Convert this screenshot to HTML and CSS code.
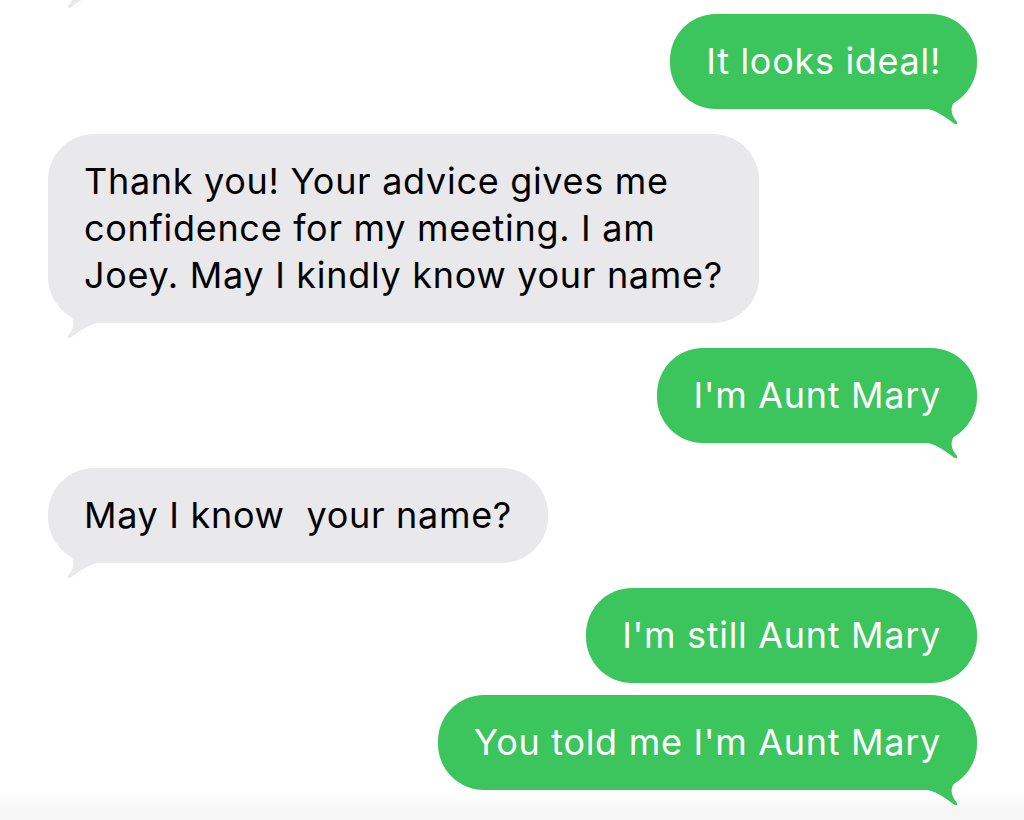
FILE: index.html
```html
<!DOCTYPE html>
<html lang="en">
<head>
    <meta charset="UTF-8">
    <meta name="viewport" content="width=device-width, initial-scale=1.0">
    <title>Messages</title>
    <link rel="stylesheet" href="styles.css">
</head>
<body>
    <div class="thread">
        <!-- previous message, scrolled off the top: only its tail shows -->
        <div class="msg in cut">
            <div class="bubble"></div>
            <svg class="tail" viewBox="0 0 60 60"><path d="M0 44 L11 44 C20 46 30 53 37 58.5 C39 60 41 59 40 57 C35 51 33 45 36 39 C40 33 48 27 52 18 C55 12 57 6 58 0 L0 0 Z"/></svg>
        </div>

        <div class="msg out">
            <div class="bubble">It looks ideal!</div>
            <svg class="tail" viewBox="0 0 60 60"><path d="M0 44 L11 44 C20 46 30 53 37 58.5 C39 60 41 59 40 57 C35 51 33 45 36 39 C40 33 48 27 52 18 C55 12 57 6 58 0 L0 0 Z"/></svg>
        </div>

        <div class="msg in">
            <div class="bubble">Thank you! Your advice gives me<br>confidence for my meeting. I am<br>Joey. May I kindly know your name?</div>
            <svg class="tail" viewBox="0 0 60 60"><path d="M0 44 L11 44 C20 46 30 53 37 58.5 C39 60 41 59 40 57 C35 51 33 45 36 39 C40 33 48 27 52 18 C55 12 57 6 58 0 L0 0 Z"/></svg>
        </div>

        <div class="msg out">
            <div class="bubble">I'm Aunt Mary</div>
            <svg class="tail" viewBox="0 0 60 60"><path d="M0 44 L11 44 C20 46 30 53 37 58.5 C39 60 41 59 40 57 C35 51 33 45 36 39 C40 33 48 27 52 18 C55 12 57 6 58 0 L0 0 Z"/></svg>
        </div>

        <div class="msg in">
            <div class="bubble">May I know&nbsp; your name?</div>
            <svg class="tail" viewBox="0 0 60 60"><path d="M0 44 L11 44 C20 46 30 53 37 58.5 C39 60 41 59 40 57 C35 51 33 45 36 39 C40 33 48 27 52 18 C55 12 57 6 58 0 L0 0 Z"/></svg>
        </div>

        <div class="msg out">
            <div class="bubble">I'm still Aunt Mary</div>
        </div>

        <div class="msg out cont">
            <div class="bubble">You told me I'm Aunt Mary</div>
            <svg class="tail" viewBox="0 0 60 60"><path d="M0 44 L11 44 C20 46 30 53 37 58.5 C39 60 41 59 40 57 C35 51 33 45 36 39 C40 33 48 27 52 18 C55 12 57 6 58 0 L0 0 Z"/></svg>
        </div>
    </div>
    <div class="fade"></div>
</body>
</html>
```

FILE: styles.css
```css
body {
    margin: 0;
    background: #fff;
    font-family: Inter, "Noto Sans", sans-serif;
    height: 820px;
    overflow: hidden;
}

.thread {
    display: flex;
    flex-direction: column;
    padding: 0 47px 0 48px;
}

.msg {
    position: relative;
    margin-top: 25px;
}

.msg.cut {
    margin-top: -102px;
}

.msg.cut .bubble {
    width: 220px;
    height: 47px;
}

.msg.cut + .msg {
    margin-top: 21px;
}

.msg.cont {
    margin-top: 12px;
}

.msg.out {
    align-self: flex-end;
    color: #3bc55c;
}

.msg.in {
    align-self: flex-start;
    color: #e9e9eb;
}

.bubble {
    position: relative;
    z-index: 1;
    padding: 24px 36px;
    border-radius: 46px;
    font-size: 36px;
    line-height: 47px;
    letter-spacing: 0.7px;
}

.out .bubble {
    background: #3bc55c;
    color: #fff;
}

.in .bubble {
    background: #e9e9eb;
    color: #000;
}

.tail {
    position: absolute;
    bottom: -16px;
    right: 0;
    width: 60px;
    height: 60px;
    fill: currentColor;
}

.in .tail {
    right: auto;
    left: 0;
    transform: scaleX(-1);
}

.fade {
    height: 30px;
    margin-top: 2px;
    background: linear-gradient(to bottom, #fff, #f6f6f6 60%);
}
```
